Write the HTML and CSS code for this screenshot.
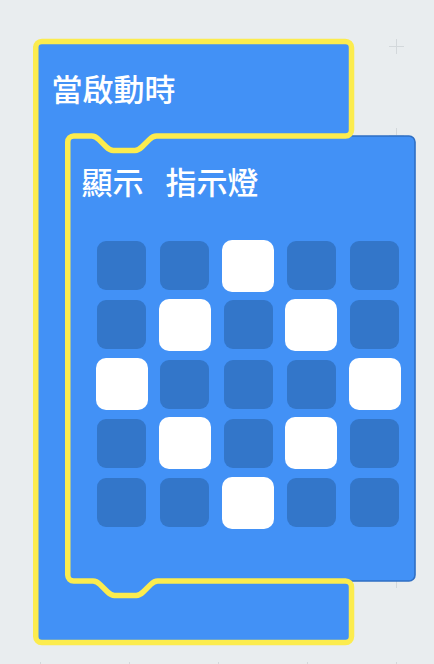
FILE: index.html
```html
<!DOCTYPE html>
<html lang="zh-Hant">
<head>
<meta charset="utf-8">
<title>當啟動時</title>
<link rel="stylesheet" href="styles.css">
</head>
<body>
<div class="workspace">
  <svg class="gridmarks" width="434" height="664" viewBox="0 0 434 664">
    <defs>
      <pattern id="plus" x="30" y="36" width="89" height="89" patternUnits="userSpaceOnUse">
        <path d="M10.5 3 V18 M3 10.5 H18" stroke="#d3d8db" stroke-width="1" fill="none"/>
      </pattern>
    </defs>
    <rect width="434" height="664" fill="url(#plus)"/>
  </svg>
  <svg class="shapes" width="434" height="664" viewBox="0 0 434 664">
    <path class="outer-fill" d="M35.75 47.5 A6 6 0 0 1 41.75 41.5 H345.5 A6 6 0 0 1 351.5 47.5 V130 A6 6 0 0 1 345.5 136 H156.5 c-3.6 0 -5.4 1.8 -7.2 3.6 l-7.2 7.2 c-1.8 1.8 -3.6 3.6 -7.2 3.6 h-21.6 c-3.6 0 -5.4 -1.8 -7.2 -3.6 l-7.2 -7.2 c-1.8 -1.8 -3.6 -3.6 -7.2 -3.6 H73.75 A6 6 0 0 0 67.75 142 V575 A6 6 0 0 0 73.75 581 H93 c3.6 0 5.4 1.8 7.2 3.6 l7.2 7.2 c1.8 1.8 3.6 3.6 7.2 3.6 h21.6 c3.6 0 5.4 -1.8 7.2 -3.6 l7.2 -7.2 c1.8 -1.8 3.6 -3.6 7.2 -3.6 H345.5 A6 6 0 0 1 351.5 587 V636.5 A6 6 0 0 1 345.5 642.5 H41.75 A6 6 0 0 1 35.75 636.5 Z"/>
    <path class="inner-fill" d="M67.75 142 A6 6 0 0 1 73.75 136 H91.7 c3.6 0 5.4 1.8 7.2 3.6 l7.2 7.2 c1.8 1.8 3.6 3.6 7.2 3.6 h21.6 c3.6 0 5.4 -1.8 7.2 -3.6 l7.2 -7.2 c1.8 -1.8 3.6 -3.6 7.2 -3.6 H409 A6 6 0 0 1 415 142 V575 A6 6 0 0 1 409 581 H157.8 c-3.6 0 -5.4 1.8 -7.2 3.6 l-7.2 7.2 c-1.8 1.8 -3.6 3.6 -7.2 3.6 h-21.6 c-3.6 0 -5.4 -1.8 -7.2 -3.6 l-7.2 -7.2 c-1.8 -1.8 -3.6 -3.6 -7.2 -3.6 H73.75 A6 6 0 0 1 67.75 575 Z"/>
    <path class="selected" d="M35.75 47.5 A6 6 0 0 1 41.75 41.5 H345.5 A6 6 0 0 1 351.5 47.5 V130 A6 6 0 0 1 345.5 136 H156.5 c-3.6 0 -5.4 1.8 -7.2 3.6 l-7.2 7.2 c-1.8 1.8 -3.6 3.6 -7.2 3.6 h-21.6 c-3.6 0 -5.4 -1.8 -7.2 -3.6 l-7.2 -7.2 c-1.8 -1.8 -3.6 -3.6 -7.2 -3.6 H73.75 A6 6 0 0 0 67.75 142 V575 A6 6 0 0 0 73.75 581 H93 c3.6 0 5.4 1.8 7.2 3.6 l7.2 7.2 c1.8 1.8 3.6 3.6 7.2 3.6 h21.6 c3.6 0 5.4 -1.8 7.2 -3.6 l7.2 -7.2 c1.8 -1.8 3.6 -3.6 7.2 -3.6 H345.5 A6 6 0 0 1 351.5 587 V636.5 A6 6 0 0 1 345.5 642.5 H41.75 A6 6 0 0 1 35.75 636.5 Z"/>
  </svg>

  <div class="block">
    <div class="hat-label">當啟動時</div>
    <div class="inner">
      <div class="inner-label"><span>顯示</span><span>指示燈</span></div>
      <div class="leds">
        <div class="led off"></div><div class="led off"></div><div class="led on"></div><div class="led off"></div><div class="led off"></div>
        <div class="led off"></div><div class="led on"></div><div class="led off"></div><div class="led on"></div><div class="led off"></div>
        <div class="led on"></div><div class="led off"></div><div class="led off"></div><div class="led off"></div><div class="led on"></div>
        <div class="led off"></div><div class="led on"></div><div class="led off"></div><div class="led on"></div><div class="led off"></div>
        <div class="led off"></div><div class="led off"></div><div class="led on"></div><div class="led off"></div><div class="led off"></div>
      </div>
    </div>
  </div>
</div>
</body>
</html>
```
FILE: styles.css
```css
html, body {
  margin: 0;
  padding: 0;
}

body {
  background: #e9edef;
  overflow: hidden;
}

.workspace {
  position: relative;
  width: 434px;
  height: 664px;
  overflow: hidden;
  background: #e9edef;
}

.gridmarks,
.shapes {
  position: absolute;
  left: 0;
  top: 0;
}

.outer-fill {
  fill: #4291f6;
}

.inner-fill {
  fill: #4291f6;
  stroke: #2f6fc4;
  stroke-width: 1.6;
}

.selected {
  fill: none;
  stroke: #fcec4e;
  stroke-width: 5.5;
  stroke-linejoin: round;
}

.block {
  position: absolute;
  left: 36px;
  top: 42px;
  display: flex;
  flex-direction: column;
  font-family: "Noto Sans CJK TC", "Noto Sans CJK SC", "Noto Sans", sans-serif;
  font-weight: 500;
  color: #ffffff;
}

.hat-label {
  font-size: 31px;
  line-height: 31px;
  height: 31px;
  margin: 30px 0 0 15.5px;
  white-space: nowrap;
}

.inner {
  margin: 62px 0 0 32px;
  padding-left: 13.5px;
  display: flex;
  flex-direction: column;
}

.inner-label {
  font-size: 31px;
  line-height: 31px;
  height: 31px;
  display: flex;
  gap: 22px;
  white-space: nowrap;
}

.leds {
  margin: 43.5px 0 0 14px;
  display: grid;
  grid-template-columns: repeat(5, 52px);
  grid-auto-rows: 52px;
  column-gap: 11.25px;
  row-gap: 7.25px;
}

.led {
  box-sizing: border-box;
  width: 52px;
  height: 52px;
  border-radius: 10px;
}

.led.on {
  background: #ffffff;
}

.led.off {
  width: 49px;
  height: 49px;
  margin: 1.5px;
  border-radius: 9px;
  background: #3376c9;
}
```
